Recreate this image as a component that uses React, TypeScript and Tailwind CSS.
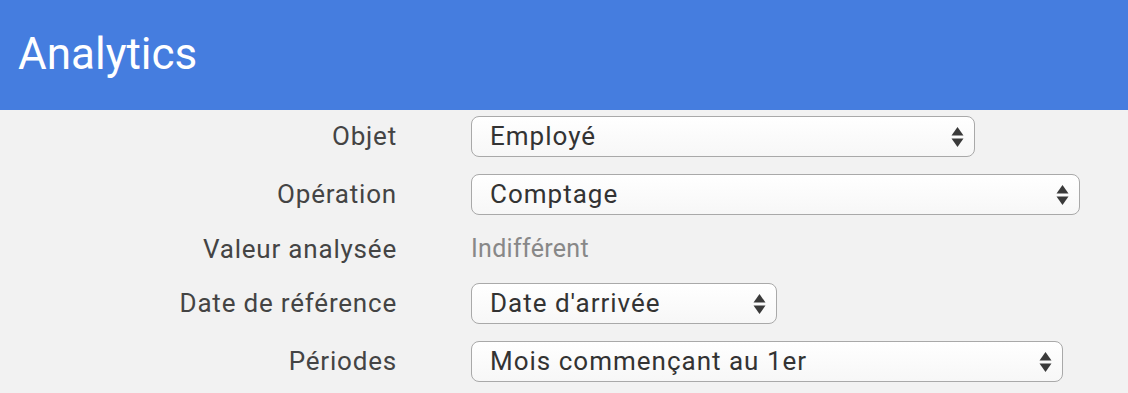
import React from 'react';

const font = { fontFamily: 'Roboto, "Noto Sans", sans-serif' };

const SelectBox = ({ value, width }: { value: string; width: string }) => (
  <div
    className={`${width} h-[41px] flex items-center justify-between pl-[18px] pr-[10px] rounded-[8px] border border-[#a9a9a9] bg-gradient-to-b from-white to-[#f7f7f7] text-[26px] tracking-[1px] text-[#333]`}
  >
    <span>{value}</span>
    <svg width="13" height="22" viewBox="0 0 13 22">
      <path d="M6.5 1 L12.5 9.5 H0.5 Z" fill="#3a3a3a" />
      <path d="M6.5 21 L12.5 12.5 H0.5 Z" fill="#3a3a3a" />
    </svg>
  </div>
);

const Row = ({ label, children, h = 'h-[41px]' }: { label: string; children: React.ReactNode; h?: string }) => (
  <div className={`flex items-center ${h}`}>
    <div className="w-[397px] text-right text-[26px] tracking-[0.8px] text-[#444]">{label}</div>
    <div className="ml-[74px] flex items-center">{children}</div>
  </div>
);

export default function App() {
  return (
    <div className="w-[1128px] h-[393px] bg-[#f2f2f2] overflow-hidden" style={font}>
      <div className="h-[110px] bg-[#457ddf] flex items-center pl-[18px]">
        <h1 className="text-[44px] text-white leading-none -mt-[2px]">Analytics</h1>
      </div>
      <div className="flex flex-col gap-[17px] pt-[6px]">
        <Row label="Objet">
          <SelectBox value="Employé" width="w-[504px]" />
        </Row>
        <Row label="Opération">
          <SelectBox value="Comptage" width="w-[609px]" />
        </Row>
        <Row label="Valeur analysée" h="h-[34px]">
          <span className="text-[25px] tracking-[0.3px] text-[#888]">Indifférent</span>
        </Row>
        <Row label="Date de référence">
          <SelectBox value="Date d'arrivée" width="w-[306px]" />
        </Row>
        <Row label="Périodes">
          <SelectBox value="Mois commençant au 1er" width="w-[592px]" />
        </Row>
      </div>
    </div>
  );
}
